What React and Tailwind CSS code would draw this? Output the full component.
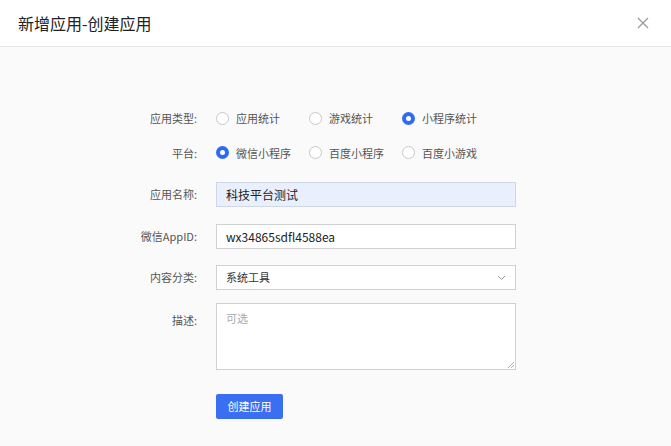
import React from 'react';

const font = { fontFamily: '"Noto Sans CJK SC", "Liberation Sans", sans-serif' };

function Radio({ checked, label }) {
  return (
    <label className="flex items-center w-[93px] shrink-0">
      <span className={`w-[13px] h-[13px] rounded-full flex items-center justify-center ${checked ? 'bg-[#2f6bf0]' : 'border border-[#c8c8c8] bg-white'}`}>
        {checked && <span className="w-[5px] h-[5px] rounded-full bg-white" />}
      </span>
      <span className="ml-[7px] text-[11px] text-[#555]">{label}</span>
    </label>
  );
}

function Row({ label, children, className = '' }) {
  return (
    <div className={`flex items-center ${className}`}>
      <div className="w-[197px] shrink-0 text-right text-[11px] text-[#555] pr-0">{label}</div>
      <div className="ml-[19px]">{children}</div>
    </div>
  );
}

export default function App() {
  return (
    <div style={font} className="w-[671px] h-[446px] bg-[#fafafa] overflow-hidden">
      <div className="h-[47px] bg-white border-b border-[#e6e6e6] flex items-center justify-between px-[18px]">
        <span className="text-[16px] text-[#222]">新增应用-创建应用</span>
        <svg width="12" height="12" viewBox="0 0 12 12" className="mr-[4px]">
          <path d="M1 1L11 11M11 1L1 11" stroke="#999" strokeWidth="1.2" />
        </svg>
      </div>
      <div className="pt-[63px]">
        <Row label="应用类型:">
          <div className="flex">
            <Radio label="应用统计" />
            <Radio label="游戏统计" />
            <Radio checked label="小程序统计" />
          </div>
        </Row>
        <Row label="平台:" className="mt-[18px]">
          <div className="flex">
            <Radio checked label="微信小程序" />
            <Radio label="百度小程序" />
            <Radio label="百度小游戏" />
          </div>
        </Row>
        <Row label="应用名称:" className="mt-[21px]">
          <div className="w-[300px] h-[25px] border border-[#cfd6e4] bg-[#e9effc] flex items-center px-[9px] text-[12px] text-[#222]">科技平台测试</div>
        </Row>
        <Row label="微信AppID:" className="mt-[17px]">
          <div className="w-[300px] h-[25px] border border-[#d0d0d0] bg-white flex items-center px-[9px] text-[12px] text-[#222]">wx34865sdfl4588ea</div>
        </Row>
        <Row label="内容分类:" className="mt-[16px]">
          <div className="w-[300px] h-[25px] border border-[#d0d0d0] bg-white flex items-center justify-between px-[9px] text-[11px] text-[#333]">
            <span>系统工具</span>
            <svg width="9" height="6" viewBox="0 0 9 6"><path d="M1 1L4.5 4.5L8 1" fill="none" stroke="#999" strokeWidth="1" /></svg>
          </div>
        </Row>
        <div className="flex mt-[13px]">
          <div className="w-[197px] shrink-0 text-right text-[11px] text-[#555] pt-[9px]">描述:</div>
          <div className="ml-[19px] w-[300px] h-[67px] border border-[#d0d0d0] bg-white px-[9px] pt-[6px] text-[11px] text-[#aaa] relative">
            可选
            <svg width="6" height="6" viewBox="0 0 6 6" className="absolute right-[1px] bottom-[1px]"><path d="M6 0L0 6M6 3L3 6" stroke="#999" strokeWidth="0.8" /></svg>
          </div>
        </div>
        <div className="ml-[216px] mt-[24px] w-[67px] h-[25px] bg-[#3b6ff2] rounded-[2px] flex items-center justify-center text-white text-[11px]">创建应用</div>
      </div>
    </div>
  );
}
